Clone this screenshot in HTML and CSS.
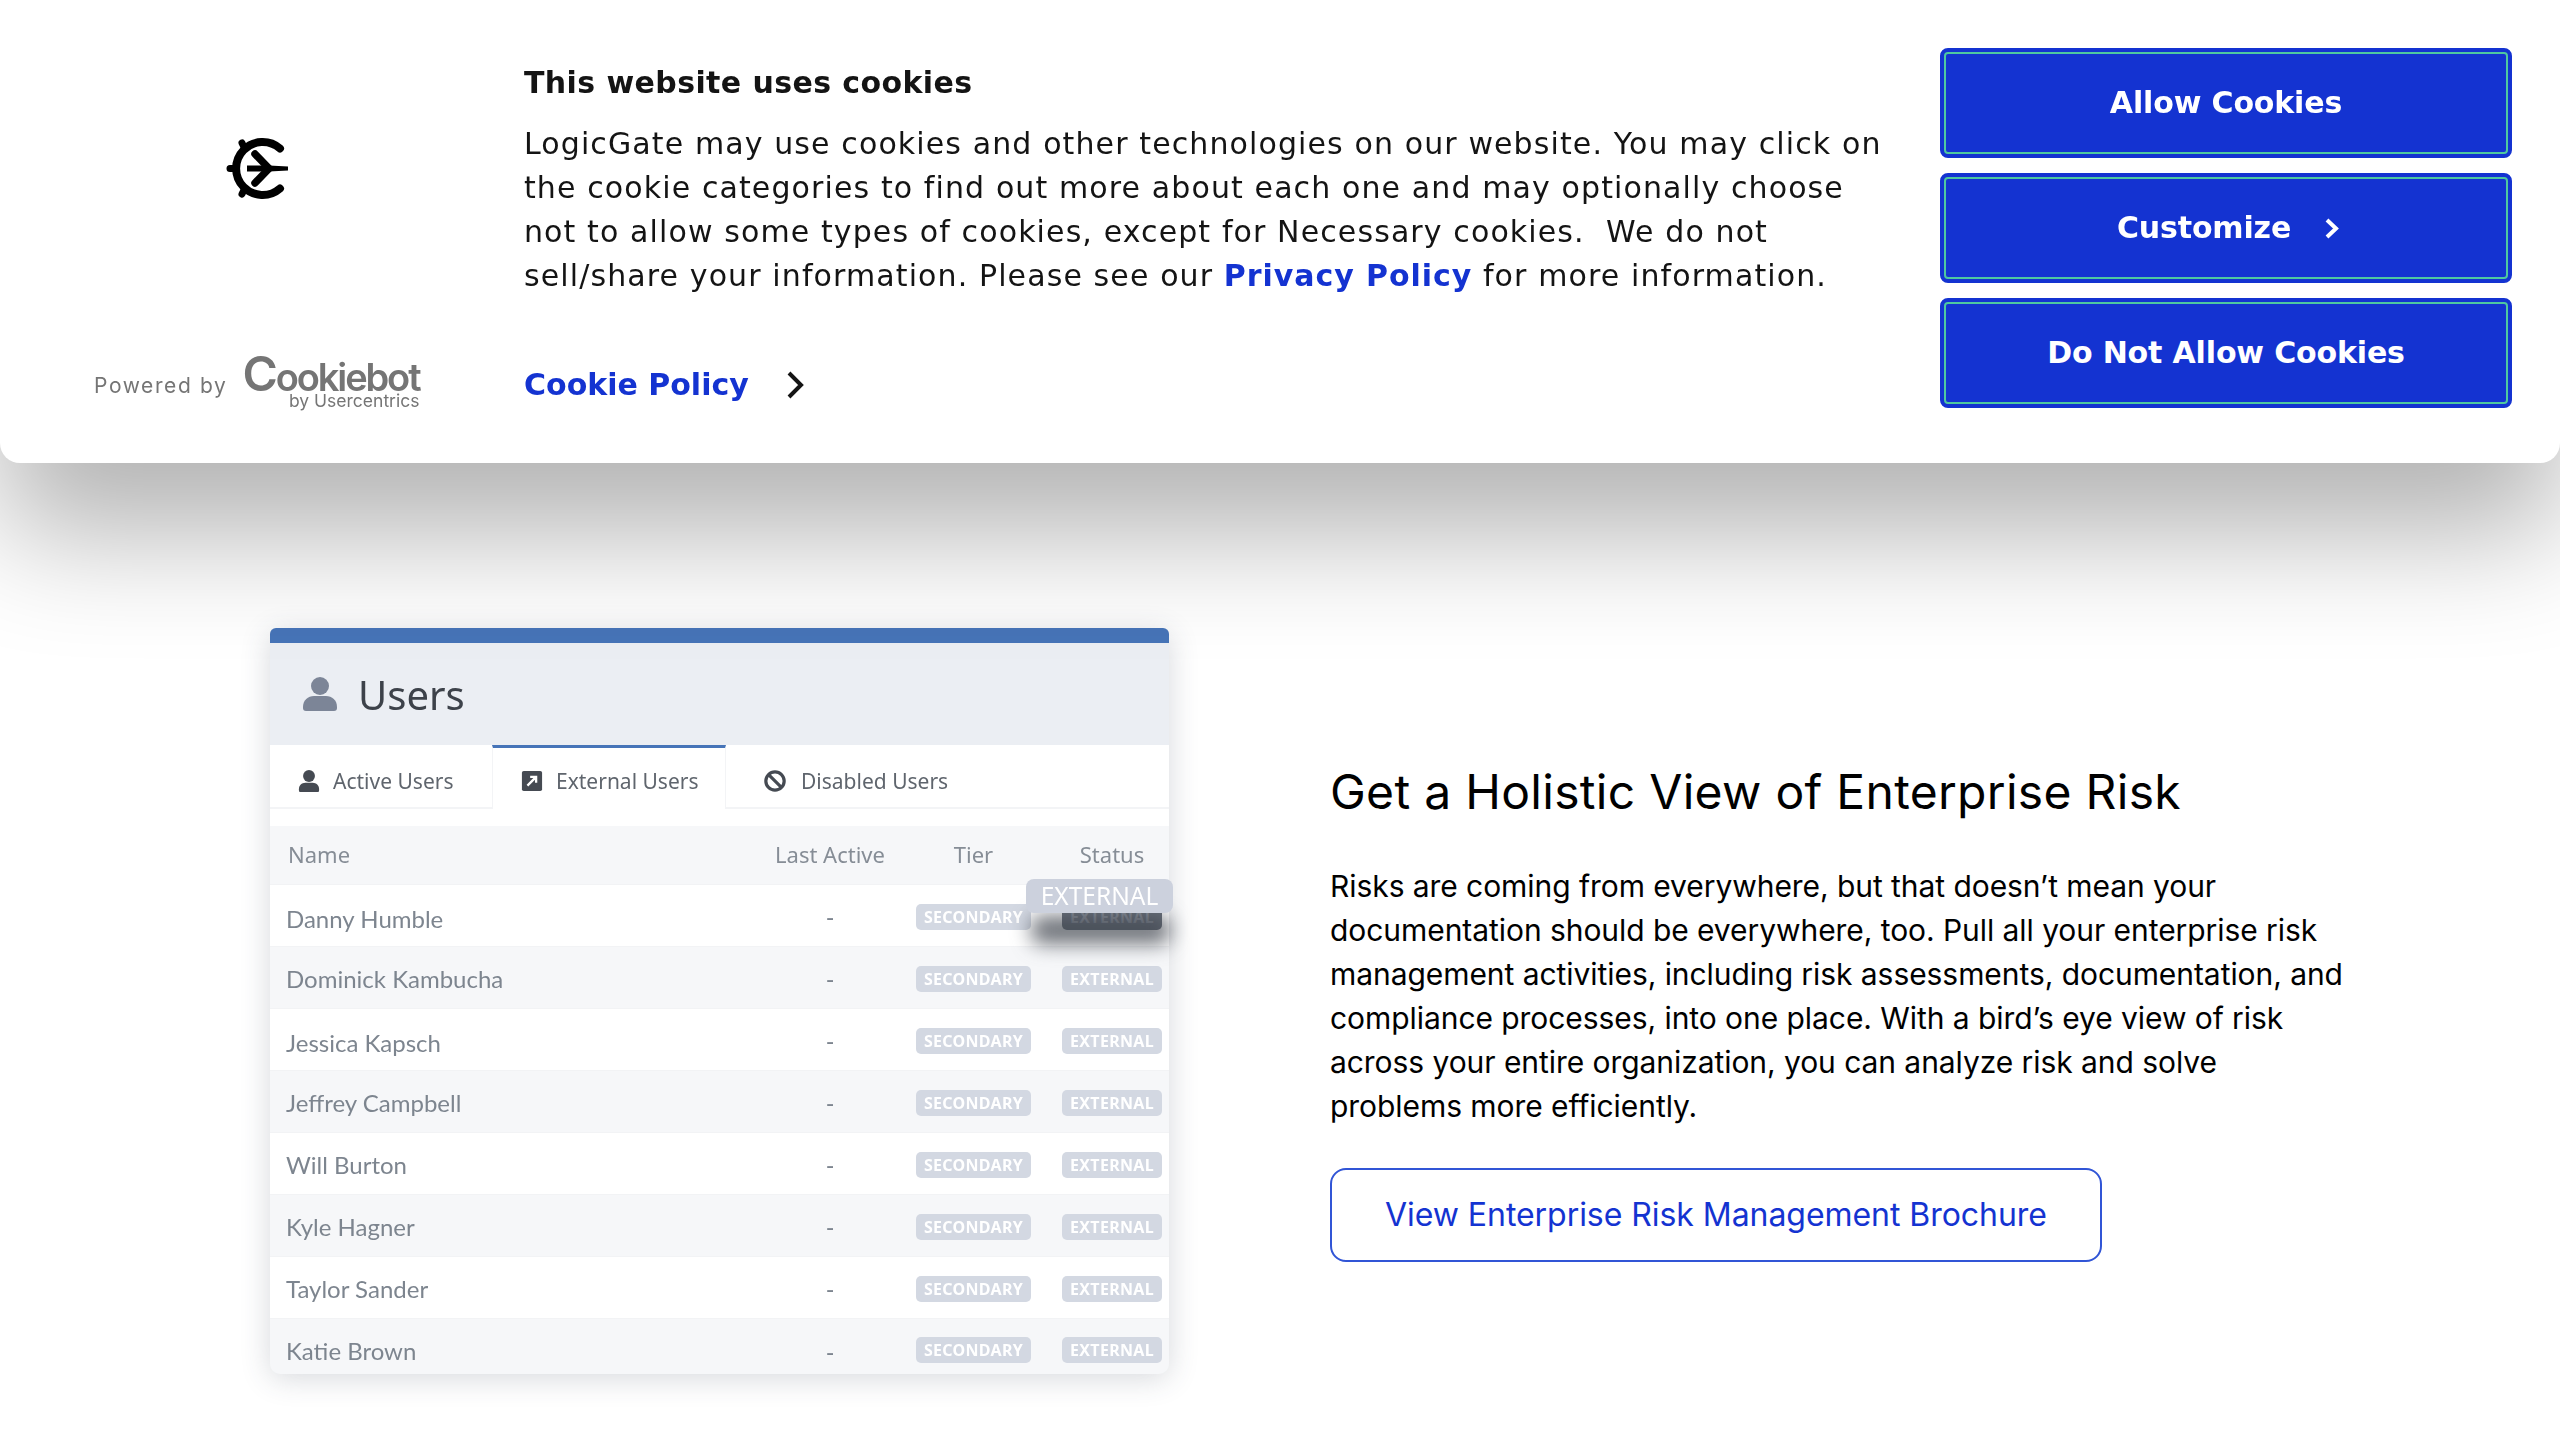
FILE: index.html
```html
<!DOCTYPE html>
<html lang="en">
<head>
    <meta charset="UTF-8">
    <meta name="viewport" content="width=device-width, initial-scale=1.0">
    <title>Enterprise Risk Management</title>
    <link rel="stylesheet" href="styles.css">
</head>
<body>
    <div class="cookie-banner">
        <div class="brand-col">
            <svg class="site-logo" viewBox="0 0 66 66" aria-hidden="true">
                <path class="logo-ring" d="M55 13.500A26.500 26.500 0 1 0 55 53.500"/>
                <path class="logo-nub" d="M5 33.500H10M17 8L19 12M17 59L19 55"/>
                <path class="logo-fill" d="M22 30.500H44L63 31.500V35.500L44 36.500H22Z"/>
                <path class="logo-arms" d="M30 19L44 33.500L30 48"/>
            </svg>
            <div class="powered">
                <span class="powered-label">Powered by</span>
                <span class="cookiebot">
                    <span class="cookiebot-name"><span class="cookiebot-c">C</span>ookiebot</span>
                    <span class="cookiebot-sub">by Usercentrics</span>
                </span>
            </div>
        </div>
        <div class="message-col">
            <h2 class="message-title">This website uses cookies</h2>
            <p class="message-text">LogicGate may use cookies and other technologies on our website. You may click on the cookie categories to find out more about each one and may optionally choose not to allow some types of cookies, except for Necessary cookies. &nbsp;We do not sell/share your information. Please see our <a href="#" class="message-link">Privacy Policy</a> for more information.</p>
            <a href="#" class="policy-link">Cookie Policy
                <svg class="policy-chevron" viewBox="0 0 20 28" aria-hidden="true"><path d="M4 2L16 14L4 26"/></svg>
            </a>
        </div>
        <div class="button-col">
            <button class="cookie-btn">Allow Cookies</button>
            <button class="cookie-btn">Customize
                <svg class="btn-chevron" viewBox="0 0 14 21" aria-hidden="true"><path d="M2 2L11 10.500L2 19"/></svg>
            </button>
            <button class="cookie-btn">Do Not Allow Cookies</button>
        </div>
    </div>

    <section class="feature">
        <div class="users-card">
            <div class="users-head">
                <svg class="users-icon" viewBox="0 0 34 34" aria-hidden="true"><circle cx="17" cy="9" r="9"/><path d="M0 30C0 23 5 19 11 19H23C29 19 34 23 34 30V31C34 33 33 34 31 34H3C1 34 0 33 0 31Z"/></svg>
                <span class="users-title">Users</span>
            </div>
            <div class="tabs">
                <div class="tab tab-first">
                    <svg class="tab-icon" viewBox="0 0 24 24" aria-hidden="true"><circle cx="12" cy="6.500" r="6.500"/><path d="M1 21C1 17 4 14 8 14H16C20 14 23 17 23 21V22C23 23.500 22.500 24 21 24H3C1.500 24 1 23.500 1 22Z"/></svg>
                    Active Users
                </div>
                <div class="tab tab-active">
                    <svg class="tab-icon" viewBox="0 0 24 24" aria-hidden="true"><rect x="1" y="1" width="22" height="22" rx="2"/><path class="tab-arrow" d="M7 17L16 8M10 7.500H16.500V14"/></svg>
                    External Users
                </div>
                <div class="tab tab-last">
                    <svg class="tab-icon" viewBox="0 0 24 24" aria-hidden="true"><circle class="tab-ring" cx="12" cy="12" r="10"/><path class="tab-ring" d="M5 5L19 19"/></svg>
                    Disabled Users
                </div>
            </div>
            <div class="users-row users-columns">
                <span>Name</span>
                <span class="col-center">Last Active</span>
                <span class="col-badge">Tier</span>
                <span class="col-badge col-status">Status</span>
            </div>
            <div class="users-row">
                <span class="user-name user-name-low">Danny Humble</span><span class="col-center">-</span>
                <span class="badge">SECONDARY</span>
                <span class="badge badge-status badge-hover">EXTERNAL<span class="tooltip">EXTERNAL</span></span>
            </div>
            <div class="users-row">
                <span class="user-name">Dominick Kambucha</span><span class="col-center">-</span>
                <span class="badge">SECONDARY</span><span class="badge badge-status">EXTERNAL</span>
            </div>
            <div class="users-row">
                <span class="user-name user-name-low">Jessica Kapsch</span><span class="col-center">-</span>
                <span class="badge">SECONDARY</span><span class="badge badge-status">EXTERNAL</span>
            </div>
            <div class="users-row">
                <span class="user-name">Jeffrey Campbell</span><span class="col-center">-</span>
                <span class="badge">SECONDARY</span><span class="badge badge-status">EXTERNAL</span>
            </div>
            <div class="users-row">
                <span class="user-name">Will Burton</span><span class="col-center">-</span>
                <span class="badge">SECONDARY</span><span class="badge badge-status">EXTERNAL</span>
            </div>
            <div class="users-row">
                <span class="user-name">Kyle Hagner</span><span class="col-center">-</span>
                <span class="badge">SECONDARY</span><span class="badge badge-status">EXTERNAL</span>
            </div>
            <div class="users-row">
                <span class="user-name">Taylor Sander</span><span class="col-center">-</span>
                <span class="badge">SECONDARY</span><span class="badge badge-status">EXTERNAL</span>
            </div>
            <div class="users-row users-row-last">
                <span class="user-name">Katie Brown</span><span class="col-center">-</span>
                <span class="badge">SECONDARY</span><span class="badge badge-status">EXTERNAL</span>
            </div>
        </div>
        <div class="feature-copy">
            <h2 class="feature-title">Get a Holistic View of Enterprise Risk</h2>
            <p class="feature-text">Risks are coming from everywhere, but that doesn’t mean your documentation should be everywhere, too. Pull all your enterprise risk management activities, including risk assessments, documentation, and compliance processes, into one place. With a bird’s eye view of risk across your entire organization, you can analyze risk and solve problems more efficiently.</p>
            <a href="#" class="feature-btn">View Enterprise Risk Management Brochure</a>
        </div>
    </section>
</body>
</html>
```

FILE: styles.css
```css
html, body {
    margin: 0;
    height: 1440px;
    overflow: hidden;
    background: #ffffff;
}
body {
    font-family: 'DejaVu Sans', sans-serif;
    color: #141414;
}

/* cookie banner */
.cookie-banner {
    position: relative;
    z-index: 2;
    display: flex;
    height: 463px;
    box-sizing: border-box;
    background: #ffffff;
    border-radius: 0 0 20px 20px;
    box-shadow: 0 70px 120px rgba(0, 0, 0, 0.3);
}
.brand-col {
    width: 524px;
    flex: none;
    box-sizing: border-box;
    padding: 135px 0 0 94px;
}
.site-logo {
    display: block;
    width: 66px;
    height: 66px;
    margin-left: 131px;
    fill: none;
    stroke: #000000;
}
.logo-ring {
    stroke-width: 8;
    stroke-linecap: round;
}
.logo-nub {
    stroke-width: 7;
    stroke-linecap: round;
}
.logo-fill {
    fill: #000000;
    stroke: none;
}
.logo-arms {
    stroke-width: 7.500;
    stroke-linecap: round;
}
.powered {
    display: flex;
    align-items: flex-start;
    gap: 15px;
    margin-top: 156px;
    color: #757575;
}
.powered-label {
    font-family: Inter, sans-serif;
    font-size: 21px;
    letter-spacing: 1.600px;
    margin-top: 16px;
}
.cookiebot {
    display: flex;
    flex-direction: column;
    align-items: flex-end;
}
.cookiebot-name {
    font-family: Inter, sans-serif;
    font-weight: 600;
    font-size: 38px;
    line-height: 34px;
    letter-spacing: -2.100px;
}
.cookiebot-c {
    font-size: 48px;
    line-height: 34px;
}
.cookiebot-sub {
    font-family: Inter, sans-serif;
    font-size: 17.500px;
    line-height: 13px;
}

.message-col {
    width: 1390px;
    flex: none;
    padding-top: 63px;
}
.message-title {
    margin: 0;
    font-size: 30px;
    line-height: 40px;
    font-weight: 700;
    letter-spacing: 0.400px;
}
.message-text {
    margin: 19px 0 0;
    font-size: 30px;
    line-height: 44px;
    letter-spacing: 1.110px;
    width: 1370px;
}
.message-link {
    color: #1433d1;
    font-weight: 700;
    letter-spacing: 0.950px;
    text-decoration: none;
}
.policy-link {
    display: flex;
    align-items: center;
    gap: 36px;
    margin-top: 65px;
    color: #1433d1;
    font-size: 30px;
    font-weight: 700;
    line-height: 44px;
    text-decoration: none;
}
.policy-chevron {
    width: 20px;
    height: 28px;
    fill: none;
    stroke: #141414;
    stroke-width: 4;
}

.button-col {
    display: flex;
    flex-direction: column;
    gap: 15px;
    width: 572px;
    margin-left: 26px;
    padding-top: 48px;
}
.cookie-btn {
    display: flex;
    align-items: center;
    justify-content: center;
    gap: 34px;
    height: 110px;
    width: 100%;
    box-sizing: border-box;
    padding-bottom: 3px;
    background: #1433d1;
    border: 4px solid #1433d1;
    border-radius: 8px;
    outline: 2px solid #4fc8a0;
    outline-offset: -6px;
    color: #ffffff;
    font-family: 'DejaVu Sans', sans-serif;
    font-size: 30px;
    font-weight: 700;
    letter-spacing: -0.150px;
}
.btn-chevron {
    width: 14px;
    height: 21px;
    margin-top: 3px;
    margin-right: -4px;
    fill: none;
    stroke: #ffffff;
    stroke-width: 4;
}

/* feature below the banner */
.feature {
    display: flex;
    gap: 161px;
    padding: 165px 0 0 270px;
}
.users-card {
    width: 899px;
    height: 744px;
    flex: none;
    position: relative;
    box-sizing: border-box;
    border-top: 15px solid #4674b8;
    border-radius: 6px 6px 10px 10px;
    background: #ffffff;
    box-shadow: 0 6px 30px rgba(50, 60, 80, 0.2);
    font-family: 'Noto Sans', sans-serif;
    filter: blur(0.4px);
}
.users-head {
    display: flex;
    align-items: center;
    gap: 21px;
    height: 102px;
    padding-left: 33px;
    background: #ebeef3;
}
.users-icon {
    width: 34px;
    height: 34px;
    fill: #7c8597;
}
.users-title {
    font-size: 40px;
    color: #3d424a;
}
.tabs {
    display: flex;
    height: 81px;
    box-sizing: border-box;
    font-size: 21px;
    color: #5f656d;
}
.tab {
    display: flex;
    align-items: center;
    gap: 13px;
    height: 64px;
    box-sizing: border-box;
    padding-top: 9px;
    border-bottom: 2px solid #f3f4f6;
}
.tab-first {
    width: 222px;
    padding-left: 28px;
}
.tab-active {
    width: 234px;
    padding-top: 4px;
    padding-left: 28px;
    border-top: 3px solid #4674b8;
    border-bottom: none;
    border-left: 1px solid #f3f4f6;
    border-right: 1px solid #f3f4f6;
}
.tab-last {
    flex: 1;
    gap: 15px;
    padding-left: 38px;
}
.tab-icon {
    width: 22px;
    height: 22px;
    fill: #454a52;
}
.tab-arrow {
    fill: none;
    stroke: #ffffff;
    stroke-width: 2.500;
}
.tab-ring {
    fill: none;
    stroke: #454a52;
    stroke-width: 3.500;
}
.users-row {
    display: grid;
    grid-template-columns: 1fr 130px 136px 131px;
    align-items: center;
    height: 62px;
    box-sizing: border-box;
    padding: 0 7px 0 16px;
    font-size: 24px;
    color: #7d858f;
    border-bottom: 1px solid #f2f3f5;
}
.users-row:nth-child(odd) {
    background: #f6f7f9;
}
.users-columns {
    height: 59px;
    padding-left: 18px;
    padding-bottom: 2px;
    font-size: 22px;
    color: #868d96;
}
.users-row-last {
    height: 55px;
    padding-top: 15px;
    align-items: start;
    border-bottom: none;
    border-radius: 0 0 10px 10px;
}
.user-name {
    font-family: Lato, sans-serif;
    padding-top: 2px;
}
.user-name-low {
    padding-top: 6px;
}
.col-center {
    text-align: center;
    white-space: nowrap;
}
.col-badge {
    justify-self: end;
    width: 115px;
    text-align: center;
}
.col-status {
    width: 100px;
}
.badge {
    justify-self: end;
    width: 115px;
    height: 26px;
    margin-top: 2px;
    border-radius: 5px;
    background: #d3d8e2;
    color: #ffffff;
    font-size: 16px;
    font-weight: 700;
    line-height: 26px;
    letter-spacing: 0.300px;
    text-align: center;
}
.users-row-last .badge {
    margin-top: 3px;
}
.badge-status {
    width: 100px;
}
.badge-hover {
    position: relative;
    background: #6a717c;
    color: #8d939e;
}
/* dark blur under the hovered badge */
.badge-hover::before {
    content: "";
    position: absolute;
    left: -31px;
    right: -8px;
    top: 12px;
    height: 28px;
    border-radius: 10px;
    background: rgba(60, 65, 75, 0.75);
    filter: blur(10px);
}
.tooltip {
    position: absolute;
    left: -36px;
    top: -25px;
    width: 147px;
    height: 34px;
    border-radius: 8px;
    background: #ccd1dd;
    color: #ffffff;
    font-size: 24.500px;
    font-weight: 400;
    line-height: 34px;
    letter-spacing: 0;
}

.feature-copy {
    width: 1025px;
    padding-top: 132px;
    font-family: Inter, sans-serif;
    color: #000000;
}
.feature-title {
    margin: 0;
    font-size: 48px;
    line-height: 64px;
    font-weight: 400;
    letter-spacing: 0.300px;
}
.feature-text {
    margin: 40px 0 0;
    font-size: 30px;
    line-height: 44px;
    letter-spacing: -0.060px;
}
.feature-btn {
    display: inline-block;
    margin-top: 40px;
    padding: 0 53px;
    height: 94px;
    box-sizing: border-box;
    border: 2px solid #3155d6;
    border-radius: 16px;
    color: #1433d1;
    font-size: 32px;
    line-height: 90px;
    letter-spacing: -0.050px;
    text-decoration: none;
    white-space: nowrap;
}
```
